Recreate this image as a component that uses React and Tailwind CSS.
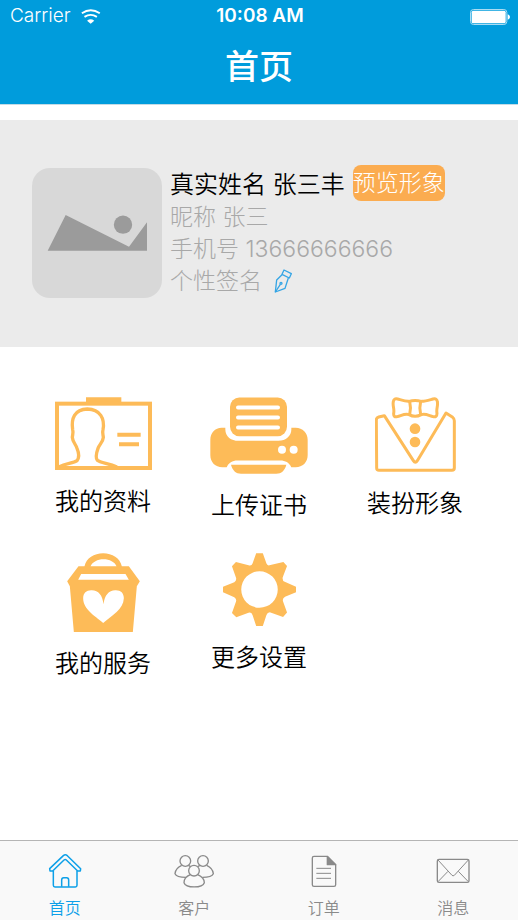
import React, { useState } from 'react';
import clsx from 'clsx';

function WifiIcon() {
  return (
    <svg viewBox="244 25 60 46" className="h-[15px] w-5" fill="none" stroke="#fff" strokeWidth="6" aria-hidden="true">
      <path d="M246 38 Q273 20 301 38" />
      <path d="M254 49 Q273 37 292 49" />
      <path d="M262 61 Q273 52 284 61 L273 70 Z" fill="#fff" stroke="none" />
    </svg>
  );
}

function BatteryIcon() {
  return (
    <svg viewBox="1407 26 120 48" className="h-4 w-10" aria-hidden="true">
      <rect x="1408.5" y="27.5" width="109" height="45" rx="9" fill="none" stroke="#a9dcf3" strokeWidth="3" />
      <rect x="1412" y="31" width="102" height="38" rx="5" fill="#fff" />
      <path d="M1520 42 Q1527 44 1527 50 Q1527 56 1520 58 Z" fill="#fff" />
    </svg>
  );
}

function AvatarPlaceholder() {
  return (
    <svg viewBox="36 175 390 390" className="h-full w-full" fill="#9b9b9b" aria-hidden="true">
      <path d="M83 423 L137 316 L327 411 L381 338 V423 Z" />
      <circle cx="309" cy="345" r="27.5" />
    </svg>
  );
}

function PenIcon() {
  return (
    <svg viewBox="342 340 54 72" className="h-6 w-[18px]" fill="none" stroke="#35a5e5" strokeWidth="4" strokeLinejoin="round" aria-hidden="true">
      <path d="M372 343 L394 354 L388 367 L366 356 Z" />
      <path d="M366 357 L350 373 L346 409 L375 398 L385 367" />
      <path d="M346 409 L361 386" />
      <circle cx="363" cy="383" r="3" />
    </svg>
  );
}

function ProfileIcon() {
  return (
    <svg viewBox="45 36 291 219" className="h-[73px] w-[97px]" fill="none" stroke="#fdbb58" aria-hidden="true">
      <path d="M138 37 H244 V52 H138 Z" fill="#fdbb58" stroke="none" />
      <rect x="51" y="56" width="279" height="193" strokeWidth="12" />
      <path
        d="M58 245 C78 235 101 235 111 227 C117 219 117 204 111 190 C107 177 98 171 97 157 C97 150 101 145 98 134 C93 101 103 73 142 72 C181 73 195 101 189 134 C186 145 190 150 190 157 C189 171 179 177 174 190 C169 204 166 218 172 226 C181 234 205 235 231 246"
        strokeWidth="10"
      />
      <path d="M232 149 H302 M237 178 H297" strokeWidth="12" />
    </svg>
  );
}

function PrinterIcon() {
  return (
    <svg viewBox="45 37 294 230" className="h-[77px] w-[98px]" fill="#fdbb58" aria-hidden="true">
      <rect x="105" y="38" width="171" height="116" rx="28" />
      <path d="M129 68 H249 M129 98 H249 M129 128 H249" stroke="#fff" strokeWidth="12" strokeLinecap="round" />
      <path d="M80 129 H91 V134 C91 156 109 168 130 168 H250 C273 168 289 153 289 134 V129 H302 C323 129 338 144 338 165 V211 C338 232 323 247 302 247 H289 C282 233 271 227 256 227 H127 C112 227 101 234 95 247 H82 C61 247 46 232 46 211 V165 C46 144 60 129 80 129 Z" />
      <circle cx="261" cy="195" r="12" fill="#fff" />
      <circle cx="296" cy="195" r="12" fill="#fff" />
      <path d="M108 240 H274 C270 257 259 267 244 267 H138 C123 267 112 257 108 240 Z" />
    </svg>
  );
}

function SuitIcon() {
  return (
    <svg viewBox="75 37 243 225" className="h-[75px] w-[81px]" fill="none" stroke="#fdbb58" strokeWidth="9" strokeLinejoin="round" aria-hidden="true">
      <path d="M103 93 L86 97 Q79 99 79 106 L80 250 Q80 257 87 257 H306 Q313 257 313 250 L313 108 Q313 102 308 98 L288 85 L202 228 Q196 237 190 228 Z" />
      <path d="M177 50 C166 51 151 45 143 43 Q131 40 130 51 C127 64 134 72 131 86 Q130 99 142 96 C154 93 165 86 177 90 Q195 100 214 90 C226 86 237 93 249 96 Q261 99 261 86 C258 72 265 64 262 51 Q261 40 249 43 C241 45 225 51 214 50 Q195 45 177 50 Z" />
      <path d="M179 50 Q184 70 179 90 M212 50 Q207 70 212 90" />
      <circle cx="195" cy="132" r="16" fill="#fdbb58" stroke="none" />
      <circle cx="195" cy="172" r="16" fill="#fdbb58" stroke="none" />
    </svg>
  );
}

function ServiceIcon() {
  return (
    <svg viewBox="82 38 218 237" className="h-[79px] w-[73px]" fill="#fdbb58" aria-hidden="true">
      <path
        fillRule="evenodd"
        d="M134 78 C139 54 163 39 190 39 C217 39 241 54 246 78 H267 L300 123 L291 138 L279 275 H102 L90 138 L82 123 L116 78 Z M152 78 H230 C225 65 209 57 191 57 C173 57 158 65 152 78 Z M124 101 L115 118 H267 L257 101 Z"
      />
      <path d="M190 248 C165 226 130 208 130 174 C130 157 141 149 156 150 C176 151 188 164 191 192 C194 164 207 151 226 150 C242 149 252 158 252 174 C251 207 216 226 190 248 Z" fill="#fff" />
    </svg>
  );
}

function GearIcon() {
  return (
    <svg viewBox="82 38 220 220" className="h-[73px] w-[73px]" fill="#fdbb58" aria-hidden="true">
      <path
        fillRule="evenodd"
        d="M182 39 H202 L213 70 Q216 78 225 74 L264 65 L275 77 L262 111 Q260 121 268 125 L302 140 V156 L269 170 Q260 175 263 184 L275 217 L263 231 L225 217 Q216 216 213 225 L202 258 H182 L171 225 Q168 216 159 218 L122 232 L109 219 L121 185 Q124 176 116 171 L82 156 V140 L116 126 Q124 121 121 112 L109 78 L121 65 L159 75 Q168 78 171 70 Z M192 93 A55 55 0 1 0 192 203 A55 55 0 1 0 192 93 Z"
      />
    </svg>
  );
}

const tabIcon = 'h-[34px] w-10';

function HomeIcon() {
  return (
    <svg viewBox="134 72 120 102" className={tabIcon} fill="none" stroke="currentColor" strokeWidth="4.5" strokeLinejoin="round" aria-hidden="true">
      <path d="M148 116 L189 77 Q195 72 201 77 L241 116 L240 123 H232 L198 90 Q195 87 191 90 L157 123 H149 Z" />
      <path d="M159 122 V166 Q159 171 164 171 H225 Q230 171 230 166 V122" />
      <path d="M184 170 V150 Q184 143 190 143 H199 Q205 143 205 150 V170" />
    </svg>
  );
}

function CustomersIcon() {
  return (
    <svg viewBox="521 72 120 102" className={tabIcon} fill="none" stroke="currentColor" strokeWidth="4" strokeLinejoin="round" aria-hidden="true">
      <circle cx="555" cy="93" r="16" />
      <circle cx="608" cy="93" r="16" />
      <circle cx="581" cy="122" r="16" />
      <path d="M544 106 C533 111 525 120 524 131 C527 138 538 142 557 142 M564 106 L571 110 M619 106 C630 111 638 120 639 131 C636 138 625 142 606 142 M599 106 L592 110" />
      <path d="M570 134 C558 139 551 147 551 158 C557 175 606 175 612 158 C612 147 604 139 592 134" />
    </svg>
  );
}

function OrdersIcon() {
  return (
    <svg viewBox="138 72 120 102" className={tabIcon} fill="none" stroke="currentColor" strokeWidth="4" strokeLinejoin="round" aria-hidden="true">
      <path d="M208 79 H168 Q163 79 163 84 V164 Q163 169 168 169 H228 Q233 169 233 164 V104 Z" />
      <path d="M208 80 V104 H233 Z" fill="currentColor" />
      <path d="M175 115 H219 M175 130 H219 M175 145 H219" strokeWidth="3" />
    </svg>
  );
}

function MessagesIcon() {
  return (
    <svg viewBox="526 72 120 102" className={tabIcon} fill="none" stroke="currentColor" strokeWidth="3" strokeLinejoin="round" aria-hidden="true">
      <rect x="539" y="88" width="95" height="69" rx="5" strokeWidth="4" />
      <path d="M541 90 L583 136 Q586 139 590 136 L632 90 M541 155 L571 124 M632 155 L602 124" />
    </svg>
  );
}

const menuItems = [
  { label: '我的资料', icon: <ProfileIcon /> },
  { label: '上传证书', icon: <PrinterIcon /> },
  { label: '装扮形象', icon: <SuitIcon /> },
  { label: '我的服务', icon: <ServiceIcon /> },
  { label: '更多设置', icon: <GearIcon /> }
];

const tabs = [
  { id: 'home', label: '首页', icon: <HomeIcon /> },
  { id: 'customers', label: '客户', icon: <CustomersIcon /> },
  { id: 'orders', label: '订单', icon: <OrdersIcon /> },
  { id: 'messages', label: '消息', icon: <MessagesIcon /> }
];

export default function App() {
  const [activeTab, setActiveTab] = useState('home');

  return (
    <div className="flex min-h-screen flex-col bg-white font-[Inter,'Noto_Sans_CJK_SC',sans-serif]">
      <header className="border-b border-[#c3dbe6] bg-[#009cdc] text-white">
        <div className="grid h-[33px] grid-cols-3 items-center pr-2 pl-2.5 text-[19px]">
          <div className="flex items-center gap-2.5 font-light">
            <span>Carrier</span>
            <WifiIcon />
          </div>
          <span className="text-center font-semibold">10:08 AM</span>
          <div className="flex justify-end">
            <BatteryIcon />
          </div>
        </div>
        <h1 className="pt-2 pb-[11px] text-center text-[34px] leading-[52px] font-medium">首页</h1>
      </header>

      <main className="flex-1 pt-[15px]">
        <section className="flex items-end gap-2 bg-[#ebebeb] px-8 pt-[45px] pb-[49px]">
          <div className="size-[130px] shrink-0 overflow-hidden rounded-[18px] bg-[#d8d8d8]">
            <AvatarPlaceholder />
          </div>
          <div className="pb-px text-[23px] leading-8 font-light text-[#a8a8a8]">
            <div className="flex h-9 items-end gap-2">
              <p className="text-2xl leading-8 font-[350] text-black">真实姓名 张三丰</p>
              <button type="button" className="h-9 rounded-lg bg-[#fbac50] text-white">
                预览形象
              </button>
            </div>
            <p>昵称 张三</p>
            <p>手机号 13666666666</p>
            <div className="flex items-center gap-3">
              <p>个性签名</p>
              <button type="button" aria-label="编辑个性签名">
                <PenIcon />
              </button>
            </div>
          </div>
        </section>

        <nav className="grid grid-cols-3 items-start gap-y-[31px] px-[25px] pt-[50px] pb-8">
          {menuItems.map((item) => (
            <button type="button" key={item.label} className="flex flex-col items-center gap-4 text-2xl font-[350] text-black">
              {item.icon}
              <span>{item.label}</span>
            </button>
          ))}
        </nav>
      </main>

      <nav className="grid grid-cols-4 border-t border-[#b5b5b5] bg-[#f9f9f9] pt-[13px]">
        {tabs.map((tab) => (
          <button
            type="button"
            key={tab.id}
            className={clsx(
              'flex flex-col items-center gap-2 text-base font-[350]',
              activeTab === tab.id ? 'text-[#0da0e8]' : 'text-[#8a8a8a]'
            )}
            onClick={() => setActiveTab(tab.id)}
          >
            {tab.icon}
            <span>{tab.label}</span>
          </button>
        ))}
      </nav>
    </div>
  );
}
